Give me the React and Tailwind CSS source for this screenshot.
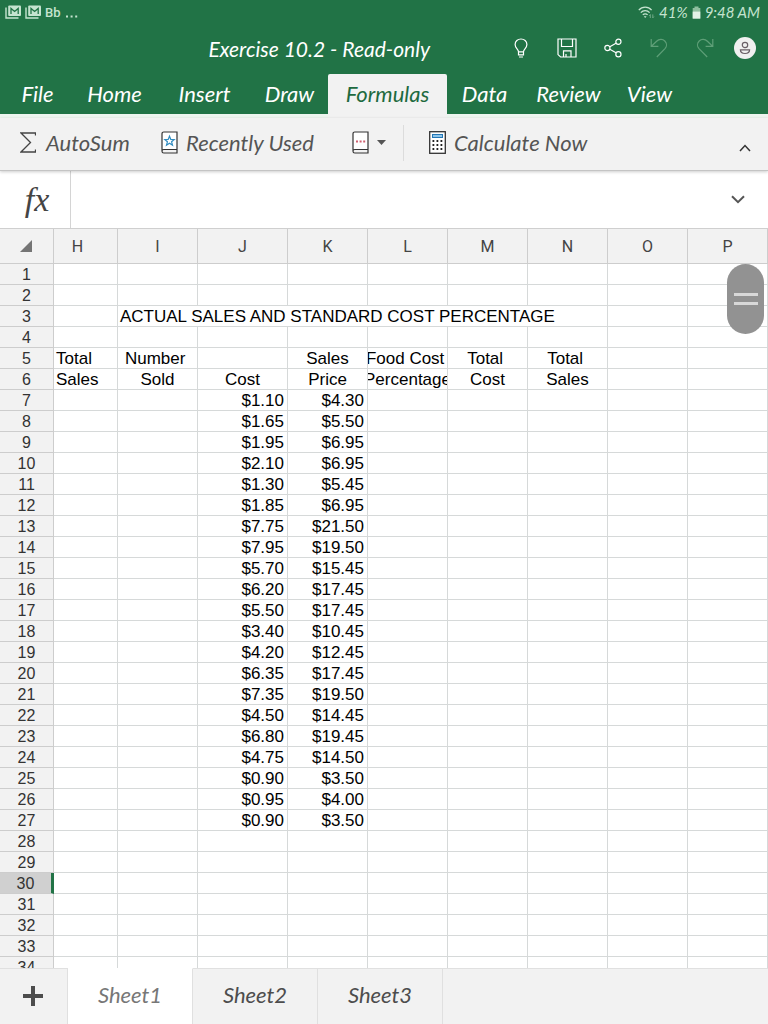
import { useState } from "react";

const TABS = [
  { name: "File", width: "w-[67px]" },
  { name: "Home", width: "w-[87px]" },
  { name: "Insert", width: "w-[93px]" },
  { name: "Draw", width: "w-[77px]" },
  { name: "Formulas", width: "w-[119px]" },
  { name: "Data", width: "w-[75px]" },
  { name: "Review", width: "w-[93px]" },
  { name: "View", width: "w-[69px]" },
];

const COLUMNS = [
  { id: "H", width: "w-[64px]" },
  { id: "I", width: "w-[80px]" },
  { id: "J", width: "w-[90px]" },
  { id: "K", width: "w-[80px]" },
  { id: "L", width: "w-[80px]" },
  { id: "M", width: "w-[80px]" },
  { id: "N", width: "w-[80px]" },
  { id: "O", width: "w-[80px]" },
  { id: "P", width: "" },
];

const PRICES = [
  ["$1.10", "$4.30"],
  ["$1.65", "$5.50"],
  ["$1.95", "$6.95"],
  ["$2.10", "$6.95"],
  ["$1.30", "$5.45"],
  ["$1.85", "$6.95"],
  ["$7.75", "$21.50"],
  ["$7.95", "$19.50"],
  ["$5.70", "$15.45"],
  ["$6.20", "$17.45"],
  ["$5.50", "$17.45"],
  ["$3.40", "$10.45"],
  ["$4.20", "$12.45"],
  ["$6.35", "$17.45"],
  ["$7.35", "$19.50"],
  ["$4.50", "$14.45"],
  ["$6.80", "$19.45"],
  ["$4.75", "$14.50"],
  ["$0.90", "$3.50"],
  ["$0.95", "$4.00"],
  ["$0.90", "$3.50"],
];

// trailing spaces are part of the cell values
const CELLS = {
  3: { I: "ACTUAL SALES AND STANDARD COST PERCENTAGE" },
  5: { H: "Total ", I: "Number ", K: "Sales", L: "Food Cost ", M: "Total ", N: "Total " },
  6: { H: "Sales", I: "Sold", J: "Cost", K: "Price", L: "Percentage", M: "Cost", N: "Sales" },
};
PRICES.forEach(([cost, price], i) => {
  CELLS[i + 7] = { J: cost, K: price };
});

const ROWS = Array.from({ length: 34 }, (_, i) => i + 1);
const SELECTED_ROW = 30;

function MailStackIcon() {
  return (
    <svg width="17" height="14" viewBox="0 0 17 14" aria-hidden="true">
      <path d="M1 2.5V13h12.5" fill="none" stroke="#c5e3cf" strokeWidth="1.4" />
      <rect x="3.2" y="0.5" width="12.8" height="10.6" rx="1" fill="#c5e3cf" />
      <path d="M6 9V3.400l3.600 3 3.600-3V9" fill="none" stroke="#217346" strokeWidth="1.3" />
    </svg>
  );
}

function StatusBar() {
  return (
    <div className="flex h-[24px] items-center justify-between pl-[5px] pr-[8px] text-[#c5e3cf]">
      <div className="flex items-center gap-[3px]">
        <MailStackIcon />
        <MailStackIcon />
        <span className="font-['Roboto',sans-serif] text-[13px] font-medium leading-none">Bb</span>
        <svg className="mt-[8px] ml-[2px]" width="12" height="3" viewBox="0 0 12 3" fill="currentColor" aria-hidden="true">
          <rect x="0" y="0.5" width="2" height="2" />
          <rect x="4.6" y="0.5" width="2" height="2" />
          <rect x="9.2" y="0.5" width="2" height="2" />
        </svg>
      </div>
      <div className="flex items-center gap-[4px] text-[15px] italic leading-none">
        <svg width="17" height="13" viewBox="0 0 17 13" fill="none" stroke="currentColor" strokeWidth="1.3" aria-hidden="true">
          <path d="M0.8 4.2C4.2 0.2 10.2 0.2 13.6 4.2M2.8 6.6C5.2 4 9.2 4 11.6 6.6M4.8 8.9C6.2 7.4 8.2 7.4 9.6 8.9" />
          <path d="M5.8 10.2h2.8l-1.4 1.8z" fill="currentColor" stroke="none" />
          <path d="M12.3 12V8.6M14.8 8.4v3.4M11.2 9.8l1.1-1.2M14.8 11.8l1.1-1.2" strokeWidth="0.8" opacity="0.6" />
        </svg>
        <span>41%</span>
        <svg width="9" height="13" viewBox="0 0 9 13" aria-hidden="true">
          <path d="M2.5 0.5h4V2h1.8v10.6H0.7V2h1.8z" fill="#8fbf9f" />
          <path d="M0.7 5.600h7.600v7H0.700z" fill="#e2f2e6" />
        </svg>
        <span>9:48 AM</span>
      </div>
    </div>
  );
}

function TitleBar() {
  return (
    <div className="flex h-[50px] items-center pb-[2px] pr-[6px] text-white">
      <h1 className="flex-1 pr-[68px] text-right text-[21px] italic leading-none">Exercise 10.2 - Read-only</h1>
      <button type="button" aria-label="Tell me" className="flex w-[46px] justify-center">
        <svg width="14" height="20" viewBox="0 0 14 20" fill="none" stroke="currentColor" strokeWidth="1.2">
          <path d="M4.5 13.8c0-2.6-3.4-3.6-3.4-7.3C1.1 3.2 3.8 1 7 1s5.9 2.2 5.9 5.5c0 3.7-3.4 4.7-3.4 7.3zM4.5 13.8v3h5v-3M5 19h4" />
        </svg>
      </button>
      <button type="button" aria-label="Save" className="flex w-[46px] justify-center">
        <svg width="20" height="20" viewBox="0 0 20 20" fill="none" stroke="currentColor" strokeWidth="1.2">
          <path d="M1 1h18v18H3.6L1 16.6zM4.5 1v7.5h11V1M6.5 19v-6.2h7.5V19M9 19v-3" />
        </svg>
      </button>
      <button type="button" aria-label="Share" className="flex w-[46px] justify-center">
        <svg width="18" height="20" viewBox="0 0 18 20" fill="none" stroke="currentColor" strokeWidth="1.2">
          <circle cx="3.4" cy="10" r="2.6" />
          <circle cx="14.4" cy="3.8" r="2.6" />
          <circle cx="14.4" cy="16.2" r="2.6" />
          <path d="M5.8 8.8l6.2-3.6M5.8 11.2l6.2 3.6" />
        </svg>
      </button>
      <button type="button" aria-label="Undo" className="flex w-[46px] justify-center text-[#5f9f78]">
        <svg width="18" height="20" viewBox="0 0 18 20" fill="none" stroke="currentColor" strokeWidth="1.2">
          <path d="M1.2 1v7.4h7.2M1.4 8.2l5.2-4.9C9 1 12.6 0.8 14.8 3c2.2 2.2 2.2 5.4 0.2 7.6L6.8 19" />
        </svg>
      </button>
      <button type="button" aria-label="Redo" className="flex w-[46px] justify-center text-[#5f9f78]">
        <svg width="18" height="20" viewBox="0 0 18 20" fill="none" stroke="currentColor" strokeWidth="1.2">
          <path d="M16.8 1v7.4H9.6M16.6 8.2l-5.2-4.9C9 1 5.4 0.8 3.2 3c-2.2 2.2-2.2 5.4-0.2 7.6L11.2 19" />
        </svg>
      </button>
      <button type="button" aria-label="Account" className="flex w-[34px] justify-center">
        <svg width="22" height="22" viewBox="0 0 22 22">
          <circle cx="11" cy="11" r="11" fill="#f0f0f0" />
          <g fill="none" stroke="#6a5f66" strokeWidth="1.2">
            <circle cx="11" cy="8" r="2.7" />
            <path d="M6.4 12.8h9.2c0 2.3-1.8 3.7-4.6 3.7s-4.6-1.4-4.6-3.7z" />
          </g>
        </svg>
      </button>
    </div>
  );
}

function RibbonTabs({ active, onSelect }) {
  return (
    <nav className="flex h-[44px] border-b-4 border-[#edf5ef] pl-[4px]">
      {TABS.map(({ name, width }) => (
        <button
          key={name}
          type="button"
          onClick={() => onSelect(name)}
          className={`${width} shrink-0 text-center text-[22px] italic leading-[40px] ${
            name === active ? "-mb-1 rounded-t-[2px] bg-[#f2f2f2] pb-1 text-[#1e6a40]" : "text-white"
          }`}
        >
          {name}
        </button>
      ))}
    </nav>
  );
}

function BookIcon({ children }) {
  return (
    <svg width="17" height="23" viewBox="0 0 17 23" fill="none" aria-hidden="true">
      <path d="M2.5 1H16v17.5H2.5L1 20V2.5z" fill="#fff" />
      <path d="M16 18.5V1H2.8C1.8 1 1 1.8 1 2.8v17.4c0 1 0.8 1.8 1.8 1.8H16v-3.5H2.8c-1 0-1.8 0.6-1.8 1.5" stroke="#333" strokeWidth="1.2" />
      {children}
    </svg>
  );
}

function Ribbon() {
  return (
    <div className="relative z-10 flex h-[53px] items-center border-b border-[#c4c4c4] bg-[#f2f2f2] pb-[3px] pl-[20px] pr-[17px] text-[22px] italic leading-none text-[#555] shadow-[0_1px_3px_rgba(0,0,0,0.2)]">
      <button type="button" className="flex w-[141px] shrink-0 items-center gap-[10px]">
        <svg width="16" height="21" viewBox="0 0 16 21" fill="none" stroke="#444" strokeWidth="1.3" aria-hidden="true">
          <path d="M15.5 3.5V1H1l9.5 9.5L1 20h14.5v-2.5" />
        </svg>
        AutoSum
      </button>
      <button type="button" className="flex w-[191px] shrink-0 items-center gap-[8px]">
        <BookIcon>
          <path d="M8.5 5.2l1.3 3.2 3.4 0.2-2.6 2.2 0.9 3.4-3-1.9-3 1.9 0.9-3.4-2.6-2.2 3.4-0.2z" stroke="#2e8bc0" strokeWidth="1.2" />
        </BookIcon>
        Recently Used
      </button>
      <button type="button" aria-label="More functions" className="flex w-[51px] shrink-0 items-center gap-[8px]">
        <BookIcon>
          <path d="M4 10.5h2M7.6 10.5h2M11.2 10.5h2" stroke="#d06070" strokeWidth="2" />
        </BookIcon>
        <svg width="9" height="5" viewBox="0 0 9 5" aria-hidden="true">
          <path d="M0 0h9L4.5 5z" fill="#555" />
        </svg>
      </button>
      <div className="h-[36px] w-px bg-[#dcdcdc]" />
      <button type="button" className="ml-[25px] flex shrink-0 items-center gap-[8px]">
        <svg width="17" height="23" viewBox="0 0 17 23" aria-hidden="true">
          <rect x="0.7" y="0.7" width="15.6" height="21.6" fill="#fff" stroke="#333" strokeWidth="1.3" />
          <rect x="3.5" y="3.5" width="10" height="3" fill="#8ec5ea" stroke="#2376b5" />
          <path d="M3.5 10h10M3.5 14h10M3.5 18h10" stroke="#222" strokeWidth="1.8" strokeDasharray="1.8 2.2" />
        </svg>
        Calculate Now
      </button>
      <button type="button" aria-label="Collapse ribbon" className="ml-auto pt-[10px]">
        <svg width="12" height="8" viewBox="0 0 12 8" fill="none" stroke="#333" strokeWidth="1.5">
          <path d="M1 7l5-5.5L11 7" />
        </svg>
      </button>
    </div>
  );
}

function FormulaBar() {
  return (
    <div className="flex h-[58px] items-stretch border-b border-[#cfcfcf] bg-white">
      <label
        htmlFor="formula"
        className="flex w-[71px] items-center justify-center border-r border-[#d4d4d4] pl-[4px] font-['Liberation_Serif',serif] text-[34px] italic leading-none text-[#444]"
      >
        fx
      </label>
      <input id="formula" type="text" readOnly className="min-w-0 flex-1 px-3 text-[16px] outline-none" />
      <button type="button" aria-label="Expand formula bar" className="px-[23px]">
        <svg width="14" height="9" viewBox="0 0 14 9" fill="none" stroke="#555" strokeWidth="2">
          <path d="M1 1.2l6 6 6-6" />
        </svg>
      </button>
    </div>
  );
}

function Cell({ row, column }) {
  const value = CELLS[row]?.[column];
  let align = "justify-center";
  if (row > 6) align = "justify-end pr-[3px]";
  if (column === "H" || row === 3) align = "justify-start pl-[2px]";
  return (
    <td colSpan={row === 3 && column === "I" ? 6 : 1} className="h-[21px] border-b border-r border-[#d6d9d9] p-0">
      <div className={`flex h-[20px] items-center overflow-hidden whitespace-pre pt-[2px] ${align}`}>{value}</div>
    </td>
  );
}

function Sheet() {
  return (
    <div className="relative min-h-0 flex-1 overflow-hidden bg-white">
      <table className="w-full table-fixed border-separate border-spacing-0 font-['Liberation_Sans',Arial,sans-serif] text-[17px] leading-[18px] text-black">
        <thead className="font-['Roboto',sans-serif] text-[16px] text-[#444]">
          <tr>
            <th aria-label="Select all" className="h-[35px] w-[54px] border-b border-r border-[#cdcdcd] bg-[#f2f2f2] p-0">
              <svg className="ml-[20px]" width="12" height="12" viewBox="0 0 12 12" aria-hidden="true">
                <path d="M12 0v12H0z" fill="#757575" />
              </svg>
            </th>
            {COLUMNS.map(({ id, width }) => (
              <th
                key={id}
                scope="col"
                className={`${width} border-b border-r border-[#cdcdcd] bg-[#f2f2f2] p-0 pt-[2px] font-normal ${id === "H" ? "pr-[16px]" : ""}`}
              >
                {id}
              </th>
            ))}
          </tr>
        </thead>
        <tbody>
          {ROWS.map((row) => (
            <tr key={row}>
              <th
                scope="row"
                className={`h-[21px] border-b border-[#cdcdcd] p-0 pt-[2px] text-[16px] font-normal text-[#333] ${
                  row === SELECTED_ROW ? "border-r-[3px] border-r-[#217346] bg-[#d0d0d0]" : "border-r bg-[#f2f2f2]"
                }`}
              >
                {row}
              </th>
              {COLUMNS.filter(({ id }) => row !== 3 || !"JKLMN".includes(id)).map(({ id }) => (
                <Cell key={id} row={row} column={id} />
              ))}
            </tr>
          ))}
        </tbody>
      </table>

      {/* Scroll handle */}
      <div className="absolute right-[4px] top-[35px] flex h-[70px] w-[37px] flex-col items-center justify-center gap-[6px] rounded-full bg-[#929292]">
        <span className="h-[3px] w-[24px] bg-[#d8d8d8]" />
        <span className="h-[3px] w-[24px] bg-[#d8d8d8]" />
      </div>
    </div>
  );
}

function SheetTabs({ active, onSelect }) {
  return (
    <div className="flex h-[56px] shrink-0 bg-[#f2f2f2] text-[22px] italic leading-none">
      <button type="button" aria-label="Add sheet" className="flex w-[68px] items-center justify-center border-r border-t border-[#e0e0e0] pb-[2px] pr-[2px]">
        <svg width="20" height="20" viewBox="0 0 20 20" aria-hidden="true">
          <path d="M10 0v20M0 10h20" stroke="#4d4d4d" strokeWidth="4" />
        </svg>
      </button>
      {["Sheet1", "Sheet2", "Sheet3"].map((name) => (
        <button
          key={name}
          type="button"
          onClick={() => onSelect(name)}
          className={`w-[125px] border-r border-t border-r-[#e0e0e0] pb-[3px] ${
            name === active ? "border-t-white bg-white text-[#777]" : "border-t-[#e0e0e0] text-[#4d4d4d]"
          }`}
        >
          {name}
        </button>
      ))}
      <div className="flex-1 border-t border-[#e0e0e0]" />
    </div>
  );
}

export default function App() {
  const [tab, setTab] = useState("Formulas");
  const [sheet, setSheet] = useState("Sheet1");

  return (
    <div className="flex h-screen flex-col overflow-hidden font-['Lato',sans-serif]">
      <header className="shrink-0">
        <div className="bg-[#217346]">
          <StatusBar />
          <TitleBar />
          <RibbonTabs active={tab} onSelect={setTab} />
        </div>
        <Ribbon />
        <FormulaBar />
      </header>
      <Sheet />
      <SheetTabs active={sheet} onSelect={setSheet} />
    </div>
  );
}
